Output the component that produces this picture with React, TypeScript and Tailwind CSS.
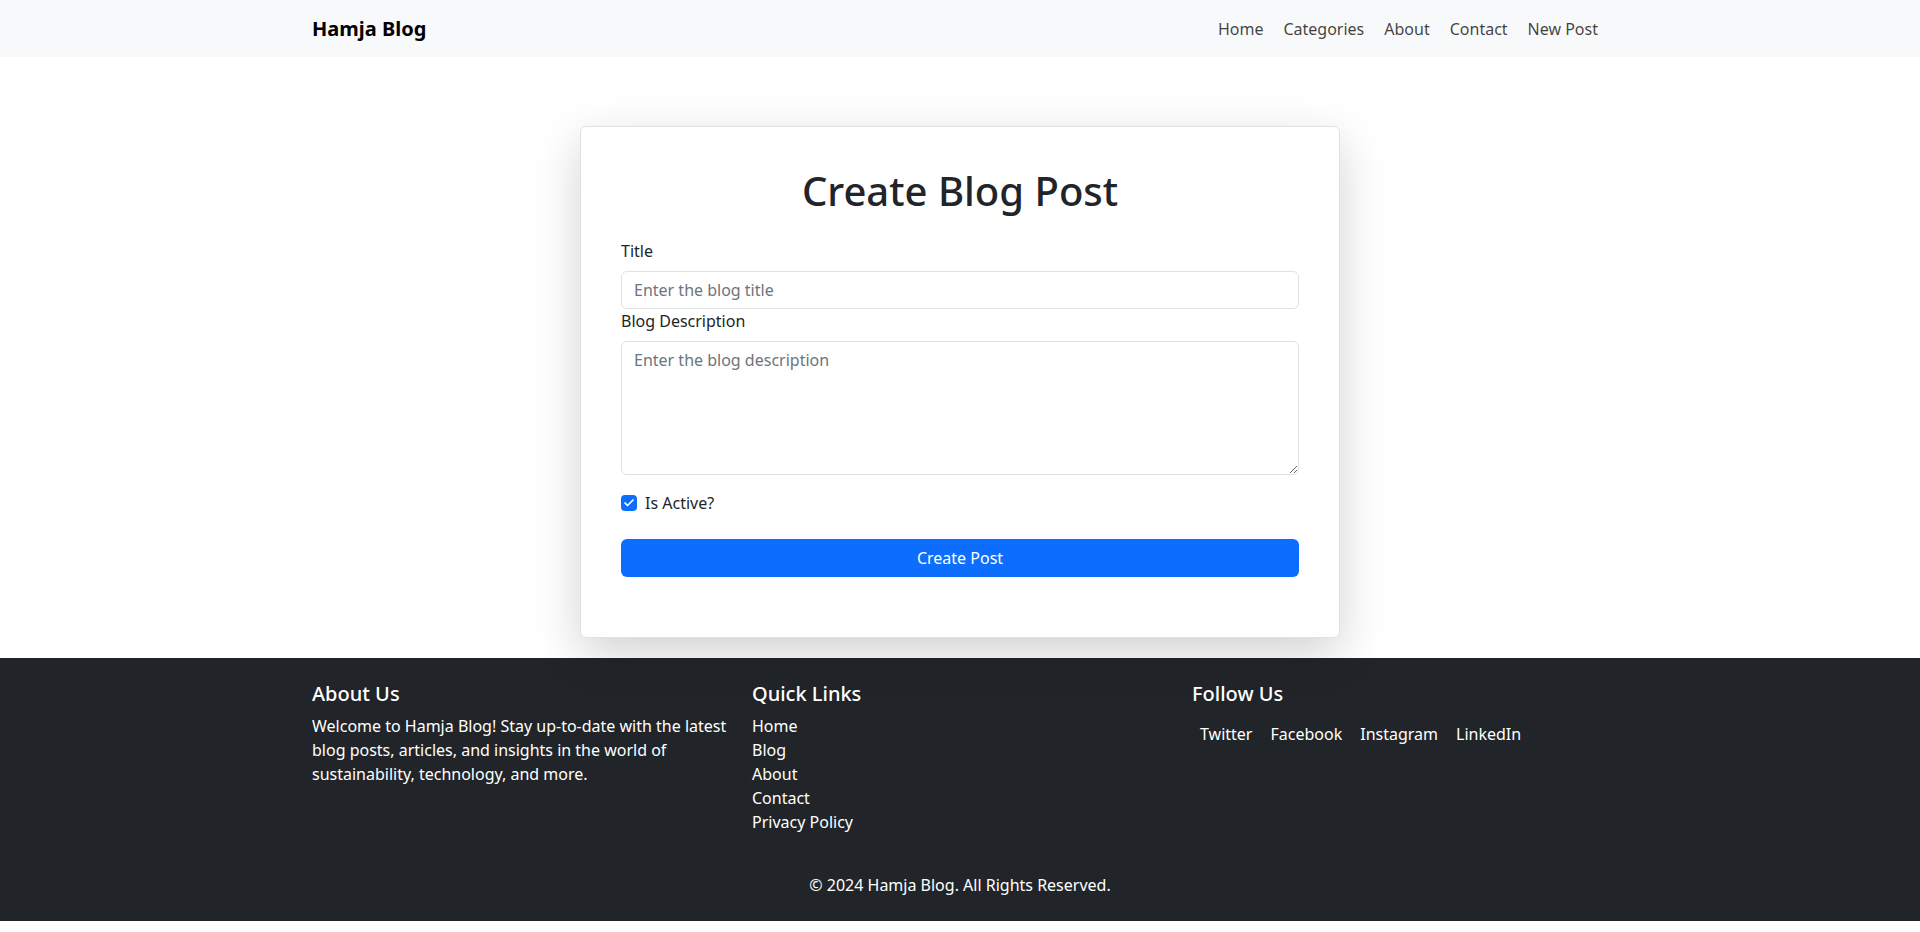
import { Check } from "lucide-react";

const NAV_LINKS = ["Home", "Categories", "About", "Contact", "New Post"];
const QUICK_LINKS = ["Home", "Blog", "About", "Contact", "Privacy Policy"];
const SOCIAL_LINKS = ["Twitter", "Facebook", "Instagram", "LinkedIn"];
const ABOUT_LINES = [
  "Welcome to Hamja Blog! Stay up-to-date with the latest",
  "blog posts, articles, and insights in the world of",
  "sustainability, technology, and more.",
];

function Navbar() {
  return (
    <nav className="bg-[#f8f9fa] h-[57px]">
      <div className="w-[1320px] mx-auto px-3 h-full flex items-center justify-between">
        <a className="text-xl font-bold text-black leading-[30px]">Hamja Blog</a>
        <ul className="flex">
          {NAV_LINKS.map((link) => (
            <li key={link}>
              <a className="px-[10px] py-2 block text-base text-black/75">{link}</a>
            </li>
          ))}
        </ul>
      </div>
    </nav>
  );
}

function CreatePostForm() {
  return (
    <section className="pt-[69px] pb-[20px] flex justify-center">
      <div className="w-[760px] bg-white border border-[#dee2e6] rounded-md shadow-[0_16px_48px_rgba(0,0,0,0.18)] p-10">
        <h1 className="text-[40px] leading-[48px] font-medium text-center text-[#212529] mb-6">
          Create Blog Post
        </h1>
        <label className="block text-base leading-6 text-[#212529] mb-2">Title</label>
        <input
          placeholder="Enter the blog title"
          className="w-full h-[38px] px-3 border border-[#dee2e6] rounded-md text-base text-[#212529] placeholder:text-[#6c757d] outline-none"
        />
        <label className="block text-base leading-6 text-[#212529] mb-2">
          Blog Description
        </label>
        <textarea
          placeholder="Enter the blog description"
          className="block w-full h-[134px] px-3 py-[6px] border border-[#dee2e6] rounded-md text-base leading-6 text-[#212529] placeholder:text-[#6c757d] outline-none"
        />
        <div className="flex items-center mt-4 mb-6">
          <span className="w-4 h-4 rounded-[4px] bg-[#0d6efd] flex items-center justify-center mr-2">
            <Check size={12} strokeWidth={3.5} className="text-white" />
          </span>
          <span className="text-base leading-6 text-[#212529]">Is Active?</span>
        </div>
        <button className="w-full h-[38px] rounded-md bg-[#0d6efd] text-white text-base mb-5">
          Create Post
        </button>
      </div>
    </section>
  );
}

function Footer() {
  return (
    <footer className="bg-[#212529] text-white py-6">
      <div className="w-[1320px] mx-auto px-3">
        <div className="flex -mx-3">
          <div className="w-[440px] px-3">
            <h5 className="text-xl font-medium leading-6 mb-2">About Us</h5>
            <p className="text-base leading-6">
              {ABOUT_LINES.map((line) => (
                <span key={line} className="block whitespace-nowrap">
                  {line}
                </span>
              ))}
            </p>
          </div>
          <div className="w-[440px] px-3">
            <h5 className="text-xl font-medium leading-6 mb-2">Quick Links</h5>
            <ul className="text-base leading-6">
              {QUICK_LINKS.map((link) => (
                <li key={link}>
                  <a className="text-white">{link}</a>
                </li>
              ))}
            </ul>
          </div>
          <div className="w-[440px] px-3">
            <h5 className="text-xl font-medium leading-6 mb-2">Follow Us</h5>
            <ul className="flex gap-[18px] pl-2 pt-2 text-base leading-6">
              {SOCIAL_LINKS.map((link) => (
                <li key={link}>
                  <a className="text-white">{link}</a>
                </li>
              ))}
            </ul>
          </div>
        </div>
        <p className="text-center text-base leading-6 mt-[39px]">
          © 2024 Hamja Blog. All Rights Reserved.
        </p>
      </div>
    </footer>
  );
}

export default function App() {
  return (
    <div className="min-h-screen bg-white font-['Noto_Sans',sans-serif]">
      <Navbar />
      <CreatePostForm />
      <Footer />
    </div>
  );
}
